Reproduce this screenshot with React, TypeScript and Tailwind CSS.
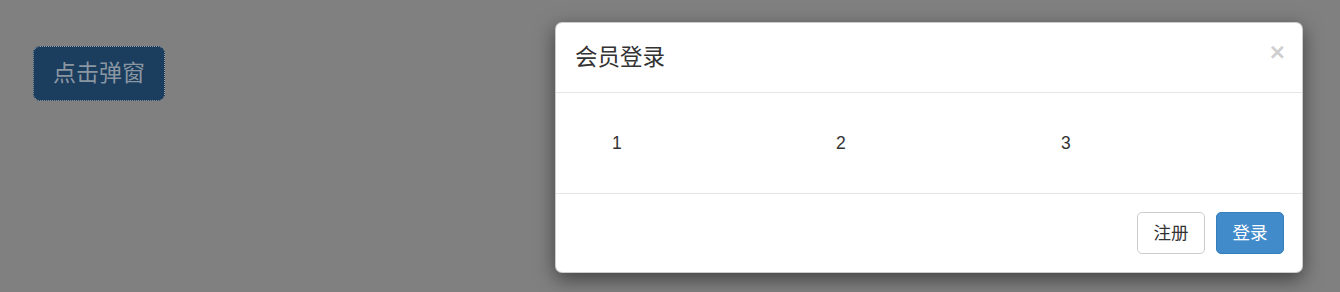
import React from "react";

export default function App() {
  const cjk = { fontFamily: '"Liberation Sans", "Noto Sans CJK SC", sans-serif' } as const;
  return (
    <div className="relative w-[1340px] h-[292px] bg-[#808080] overflow-hidden" style={cjk}>
      <div className="pt-[46px] pl-[33px]">
        <button className="h-[55px] w-[132px] rounded-[7px] border border-[#173652] bg-[#1b3d5e] text-[23px] leading-none text-[#8a96a2] outline-1 outline-dotted outline-[#9aa4ae] -outline-offset-1">
          点击弹窗
        </button>
      </div>

      <div className="absolute left-[555px] top-[22px] w-[748px] h-[251px] rounded-[7px] border border-black/20 bg-white shadow-[0_6px_19px_rgba(0,0,0,0.5)] flex flex-col">
        <div className="h-[70px] border-b border-[#e5e5e5] pl-[19px] pr-[17px] flex items-center justify-between">
          <h4 className="text-[22.5px] leading-[32px] text-[#333] pt-[1px]">会员登录</h4>
          <span className="self-start mt-[16px] text-[26px] font-bold leading-none text-black/20">×</span>
        </div>
        <div className="h-[100px] flex items-center pl-[56px] text-[17.5px] text-[#333]">
          <div className="w-[224px]">1</div>
          <div className="w-[225px]">2</div>
          <div className="w-[224px]">3</div>
        </div>
        <div className="flex-1 border-t border-[#e5e5e5] flex items-start justify-end gap-[11px] pt-[18px] pr-[18px]">
          <button className="h-[42px] w-[68px] rounded-[5px] border border-[#ccc] bg-white text-[17.5px] text-[#333]">注册</button>
          <button className="h-[42px] w-[68px] rounded-[5px] border border-[#357ebd] bg-[#428bca] text-[17.5px] text-white">登录</button>
        </div>
      </div>
    </div>
  );
}
